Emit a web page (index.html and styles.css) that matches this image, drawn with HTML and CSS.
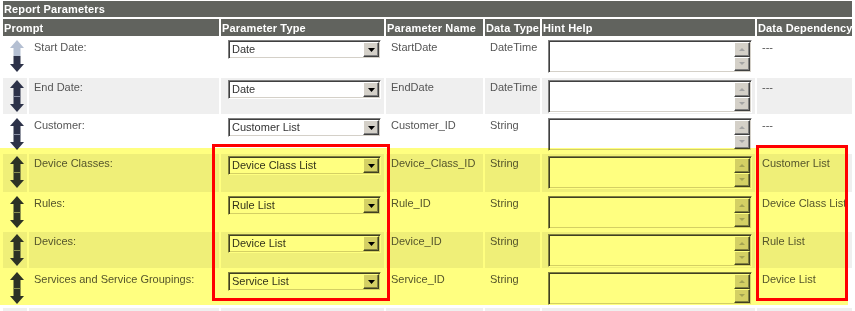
FILE: index.html
```html
<!DOCTYPE html>
<html lang="en">
<head>
  <meta charset="UTF-8">
  <title>Report Parameters</title>
  <link rel="stylesheet" href="styles.css">
</head>
<body>
  <div class="report">
    <table class="params">
      <colgroup>
        <col class="c-move">
        <col class="c-prompt">
        <col class="c-type">
        <col class="c-name">
        <col class="c-dtype">
        <col class="c-hint">
        <col class="c-dep">
      </colgroup>
      <tr class="title"><th colspan="7">Report Parameters</th></tr>
      <tr class="head">
        <th colspan="2">Prompt</th>
        <th>Parameter Type</th>
        <th>Parameter Name</th>
        <th>Data Type</th>
        <th>Hint Help</th>
        <th>Data Dependency</th>
      </tr>

      <tr class="row tall">
        <td class="move"><svg class="arrow first" width="14" height="32" viewBox="0 0 14 32"><path class="up" d="M7 0L14 8H10.5V16H3.5V8H0Z"/><path class="down" d="M3.5 16H10.5V24H14L7 32L0 24H3.5Z"/></svg></td>
        <td class="prompt">Start Date:</td>
        <td class="type"><div class="select"><span>Date</span><b class="drop"><svg width="7" height="4" viewBox="0 0 7 4"><path d="M0 0H7L3.5 4Z"/></svg></b></div></td>
        <td>StartDate</td>
        <td>DateTime</td>
        <td class="hint"><div class="memo"><span class="bar"><b class="up"></b><b class="down"></b></span></div></td>
        <td class="dep">---</td>
      </tr>

      <tr class="row alt">
        <td class="move"><svg class="arrow" width="14" height="32" viewBox="0 0 14 32"><path class="up" d="M7 0L14 8H10.5V16H3.5V8H0Z"/><path class="down" d="M3.5 16H10.5V24H14L7 32L0 24H3.5Z"/><path class="split" d="M3.5 16.5H10.5"/></svg></td>
        <td class="prompt">End Date:</td>
        <td class="type"><div class="select"><span>Date</span><b class="drop"><svg width="7" height="4" viewBox="0 0 7 4"><path d="M0 0H7L3.5 4Z"/></svg></b></div></td>
        <td>EndDate</td>
        <td>DateTime</td>
        <td class="hint"><div class="memo"><span class="bar"><b class="up"></b><b class="down"></b></span></div></td>
        <td class="dep">---</td>
      </tr>

      <tr class="row">
        <td class="move"><svg class="arrow" width="14" height="32" viewBox="0 0 14 32"><path class="up" d="M7 0L14 8H10.5V16H3.5V8H0Z"/><path class="down" d="M3.5 16H10.5V24H14L7 32L0 24H3.5Z"/><path class="split" d="M3.5 16.5H10.5"/></svg></td>
        <td class="prompt">Customer:</td>
        <td class="type"><div class="select"><span>Customer List</span><b class="drop"><svg width="7" height="4" viewBox="0 0 7 4"><path d="M0 0H7L3.5 4Z"/></svg></b></div></td>
        <td>Customer_ID</td>
        <td>String</td>
        <td class="hint"><div class="memo"><span class="bar"><b class="up"></b><b class="down"></b></span></div></td>
        <td class="dep">---</td>
      </tr>

      <tr class="row alt tall">
        <td class="move"><svg class="arrow" width="14" height="32" viewBox="0 0 14 32"><path class="up" d="M7 0L14 8H10.5V16H3.5V8H0Z"/><path class="down" d="M3.5 16H10.5V24H14L7 32L0 24H3.5Z"/><path class="split" d="M3.5 16.5H10.5"/></svg></td>
        <td class="prompt">Device Classes:</td>
        <td class="type"><div class="select"><span>Device Class List</span><b class="drop"><svg width="7" height="4" viewBox="0 0 7 4"><path d="M0 0H7L3.5 4Z"/></svg></b></div></td>
        <td>Device_Class_ID</td>
        <td>String</td>
        <td class="hint"><div class="memo"><span class="bar"><b class="up"></b><b class="down"></b></span></div></td>
        <td class="dep">Customer List</td>
      </tr>

      <tr class="row">
        <td class="move"><svg class="arrow" width="14" height="32" viewBox="0 0 14 32"><path class="up" d="M7 0L14 8H10.5V16H3.5V8H0Z"/><path class="down" d="M3.5 16H10.5V24H14L7 32L0 24H3.5Z"/><path class="split" d="M3.5 16.5H10.5"/></svg></td>
        <td class="prompt">Rules:</td>
        <td class="type"><div class="select"><span>Rule List</span><b class="drop"><svg width="7" height="4" viewBox="0 0 7 4"><path d="M0 0H7L3.5 4Z"/></svg></b></div></td>
        <td>Rule_ID</td>
        <td>String</td>
        <td class="hint"><div class="memo"><span class="bar"><b class="up"></b><b class="down"></b></span></div></td>
        <td class="dep">Device Class List</td>
      </tr>

      <tr class="row alt">
        <td class="move"><svg class="arrow" width="14" height="32" viewBox="0 0 14 32"><path class="up" d="M7 0L14 8H10.5V16H3.5V8H0Z"/><path class="down" d="M3.5 16H10.5V24H14L7 32L0 24H3.5Z"/><path class="split" d="M3.5 16.5H10.5"/></svg></td>
        <td class="prompt">Devices:</td>
        <td class="type"><div class="select"><span>Device List</span><b class="drop"><svg width="7" height="4" viewBox="0 0 7 4"><path d="M0 0H7L3.5 4Z"/></svg></b></div></td>
        <td>Device_ID</td>
        <td>String</td>
        <td class="hint"><div class="memo"><span class="bar"><b class="up"></b><b class="down"></b></span></div></td>
        <td class="dep">Rule List</td>
      </tr>

      <tr class="row">
        <td class="move"><svg class="arrow" width="14" height="32" viewBox="0 0 14 32"><path class="up" d="M7 0L14 8H10.5V16H3.5V8H0Z"/><path class="down" d="M3.5 16H10.5V24H14L7 32L0 24H3.5Z"/><path class="split" d="M3.5 16.5H10.5"/></svg></td>
        <td class="prompt">Services and Service Groupings:</td>
        <td class="type"><div class="select"><span>Service List</span><b class="drop"><svg width="7" height="4" viewBox="0 0 7 4"><path d="M0 0H7L3.5 4Z"/></svg></b></div></td>
        <td>Service_ID</td>
        <td>String</td>
        <td class="hint"><div class="memo"><span class="bar"><b class="up"></b><b class="down"></b></span></div></td>
        <td class="dep">Device List</td>
      </tr>

      <tr class="row alt">
        <td class="move"></td>
        <td class="prompt"></td>
        <td class="type"></td>
        <td></td>
        <td></td>
        <td class="hint"></td>
        <td class="dep"></td>
      </tr>
    </table>

    <!-- annotation: highlighter and red boxes drawn over the table -->
    <div class="highlight"></div>
    <div class="box box-type"></div>
    <div class="box box-dep"></div>
  </div>
</body>
</html>
```

FILE: styles.css
```css
body {
  margin: 0;
  font-family: "Liberation Sans", Arial, sans-serif;
  font-size: 11px;
  color: #555;
  background: #fff;
  overflow: hidden;
}
.report {
  position: relative;
}
.params {
  margin: -1px 0 0 1px;
  width: 853px;
  border-spacing: 2px;
  table-layout: fixed;
}
.c-move { width: 24px; }
.c-prompt { width: 190px; }
.c-type { width: 163px; }
.c-name { width: 97px; }
.c-dtype { width: 55px; }
.c-hint { width: 213px; }
.c-dep { width: 95px; }

th {
  background-color: #61635e;
  color: #fff;
  font-weight: bold;
  text-align: left;
  padding: 0 0 0 1px;
  letter-spacing: 0.15px;
  white-space: nowrap;
}
.title { height: 16px; }
.head { height: 17px; }

.row { height: 36px; }
.row.tall { height: 38px; }
.row td {
  vertical-align: top;
  padding: 3px 5px 0;
  line-height: 13px;
  white-space: nowrap;
  overflow: hidden;
}
.row.alt td {
  background-color: #efefef;
}
.row td.move {
  padding: 2px 0 0 7px;
}
.row td.type {
  padding: 2px 0 0 7px;
}
.row td.hint {
  padding: 2px 0 0 6px;
}

.arrow {
  display: block;
}
.arrow path {
  fill: #2d3249;
}
.arrow .split {
  fill: none;
  stroke: #8a90a4;
  stroke-width: 1;
}
.arrow.first .up {
  fill: #b4bfd2;
}

.select {
  width: 153px;
  height: 19px;
  box-sizing: border-box;
  display: flex;
  align-items: center;
  padding: 0 1px 0 3px;
  background: #fff;
  color: #333;
  border: 1px solid;
  border-color: #808080 #fff #fff #808080;
  box-shadow: inset 1px 1px #404040, inset -1px -1px #d4d0c8;
}
.drop {
  margin-left: auto;
  width: 16px;
  height: 15px;
  box-sizing: border-box;
  display: flex;
  align-items: center;
  justify-content: center;
  background: #d4d0c8;
  border: 1px solid;
  border-color: #fff #404040 #404040 #fff;
  box-shadow: inset -1px -1px #808080;
}
.drop svg {
  display: block;
  fill: #000;
}

.memo {
  width: 204px;
  height: 33px;
  box-sizing: border-box;
  display: flex;
  justify-content: flex-end;
  padding: 1px 1px 1px 0;
  background: #fff;
  border: 1px solid;
  border-color: #808080 #fff #fff #808080;
  box-shadow: inset 1px 1px #404040, inset -1px -1px #d4d0c8;
}
.bar {
  width: 16px;
  display: flex;
  flex-direction: column;
}
.bar b {
  flex: 1;
  display: flex;
  align-items: center;
  justify-content: center;
  background: #d4d0c8;
  border: 1px solid;
  border-color: #fff #404040 #404040 #fff;
  box-shadow: inset -1px -1px #808080;
}
.bar .up::after,
.bar .down::after {
  content: "";
  border-left: 3px solid transparent;
  border-right: 3px solid transparent;
}
.bar .up::after {
  border-bottom: 3px solid #a4a4a4;
}
.bar .down::after {
  border-top: 3px solid #a4a4a4;
}

.highlight {
  position: absolute;
  left: 0;
  top: 149px;
  width: 848px;
  height: 157px;
  background: #ffff80;
  mix-blend-mode: multiply;
  pointer-events: none;
}
.box {
  position: absolute;
  box-sizing: border-box;
  border: 3px solid #f00;
  pointer-events: none;
}
.box-type {
  left: 212px;
  top: 145px;
  width: 178px;
  height: 157px;
}
.box-dep {
  left: 756px;
  top: 146px;
  width: 92px;
  height: 156px;
}
```
